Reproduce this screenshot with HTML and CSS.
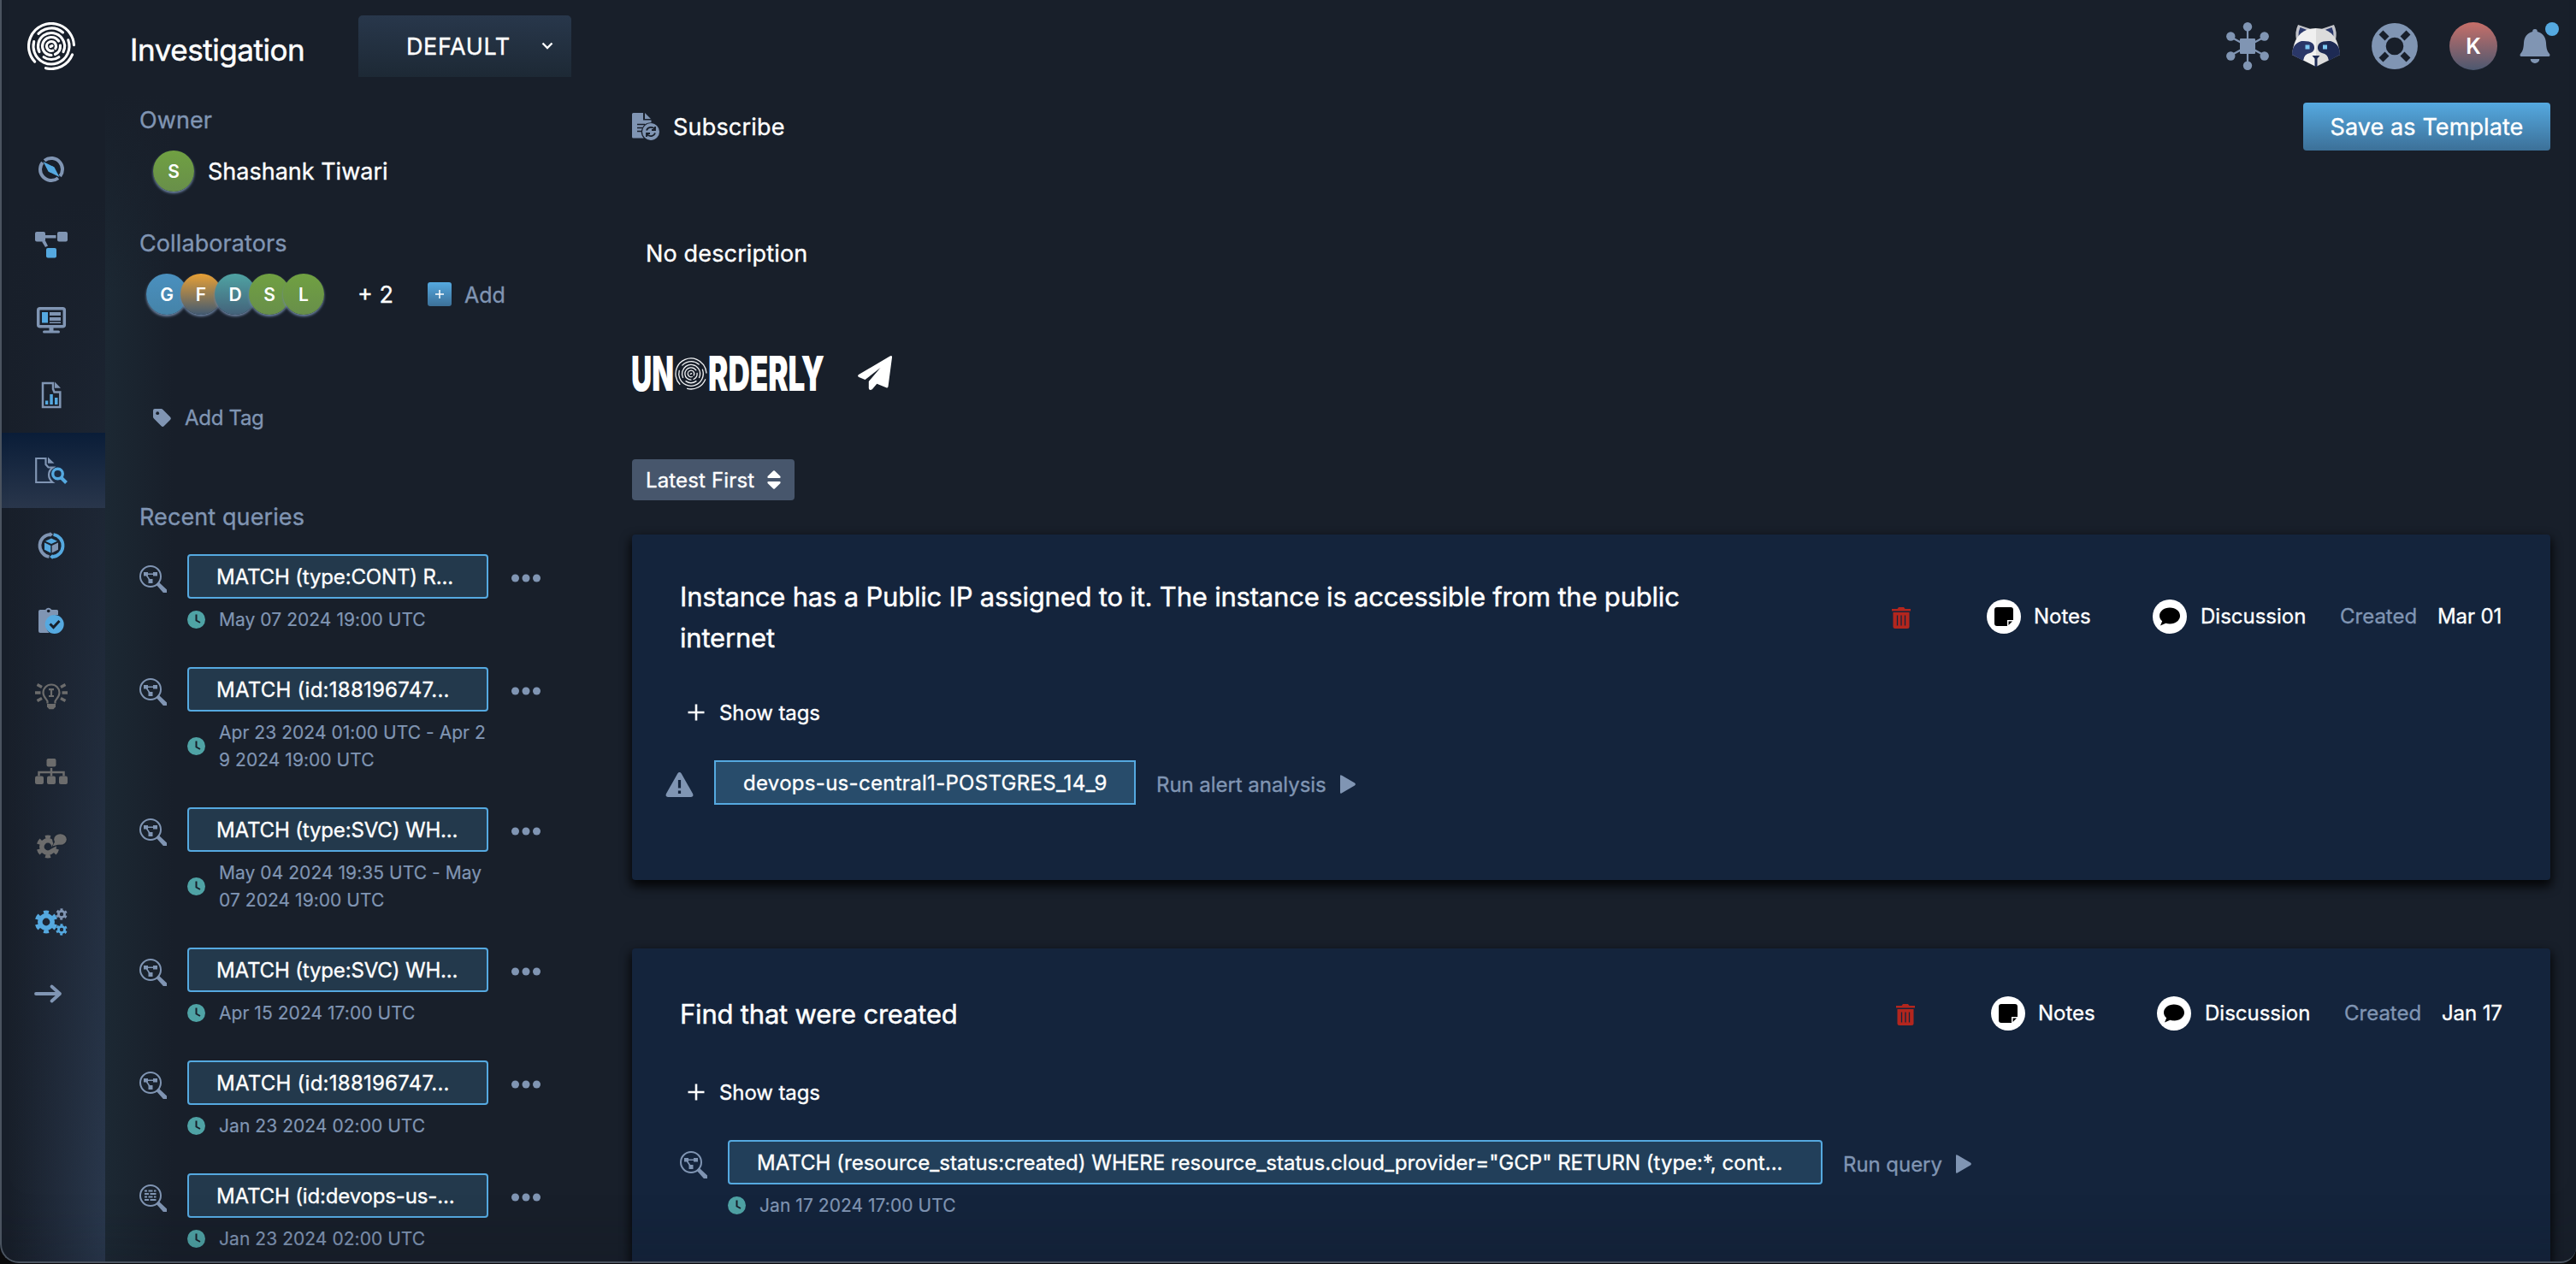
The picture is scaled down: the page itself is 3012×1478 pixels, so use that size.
FILE: index.html
```html
<!DOCTYPE html>
<html lang="en">
<head>
<meta charset="utf-8">
<title>Investigation</title>
<link rel="stylesheet" href="styles.css">
</head>
<body>
<svg class="defs" aria-hidden="true">
  <defs>
    <symbol id="lens" viewBox="0 0 32 32">
      <circle cx="13" cy="13" r="12" fill="none" stroke="currentColor" stroke-width="2"/>
      <path d="M20.5 22.5l2-2 9 8.5a2 2 0 0 1-2.800 2.800z" fill="currentColor" stroke="currentColor" stroke-width="1.500"/>
    </symbol>
    <symbol id="lens-graph" viewBox="0 0 32 32">
      <use href="#lens"/>
      <path d="M5 8h5v4.500H5zM16 8h5v4.500h-5zM10.500 16h5v5h-5z" fill="currentColor"/>
      <path d="M9 10.200h8M8.500 12l3.500 5" stroke="currentColor" stroke-width="1.600" fill="none"/>
    </symbol>
    <symbol id="lens-table" viewBox="0 0 32 32">
      <use href="#lens"/>
      <path d="M6 7.500h3m1.500 0h5m1.500 0h2.500M6 11h5m1.500 0h7M6 14.500h3m1.500 0h5m1.500 0h2.500M6 18h5m1.500 0h7" stroke="currentColor" stroke-width="1.800" fill="none"/>
    </symbol>
    <symbol id="clock" viewBox="0 0 21 21">
      <circle cx="10.500" cy="10.500" r="10.500" fill="#4fa3a5"/>
      <path d="M10.500 4.500v7l4.500 2.500" stroke="#181f2a" stroke-width="2" fill="none"/>
    </symbol>
    <symbol id="dots" viewBox="0 0 34 10">
      <circle cx="4.500" cy="5" r="4.500"/><circle cx="17" cy="5" r="4.500"/><circle cx="29.500" cy="5" r="4.500"/>
    </symbol>
    <symbol id="plus" viewBox="0 0 20 20"><path d="M10 .5v19M.5 10h19" stroke="currentColor" stroke-width="2.600"/></symbol>
    <symbol id="play" viewBox="0 0 18 22"><path d="M0 1.500Q0-.5 2 .8L17 9.500q1.800 1.500 0 3L2 21.200Q0 22.500 0 20.500z" fill="currentColor"/></symbol>
    <symbol id="trash" viewBox="0 0 22 25">
      <path d="M0 2h6.500L8 0h6l1.500 2H22v2.500H0z" fill="#b3261e"/>
      <path d="M1.500 6h19v16.500a2.500 2.500 0 0 1-2.500 2.500H4a2.500 2.500 0 0 1-2.500-2.500z" fill="#b3261e"/>
      <path d="M6.500 9.500v12M11 9.500v12M15.500 9.500v12" stroke="#14243c" stroke-width="1.300"/>
    </symbol>
    <symbol id="note" viewBox="0 0 40 40">
      <circle cx="20" cy="20" r="20" fill="#fff"/>
      <path d="M12 9h16a3 3 0 0 1 3 3v12h-7v7H12a3 3 0 0 1-3-3V12a3 3 0 0 1 3-3z"/>
      <path d="M25.500 30v-4.500H30z"/>
    </symbol>
    <symbol id="chat" viewBox="0 0 40 40">
      <circle cx="20" cy="20" r="20" fill="#fff"/>
      <path d="M20 9.500c6.800 0 12 4.200 12 9.500s-5.200 9.500-12 9.500c-1.600 0-3.200-.3-4.600-.7L9 30.500l2.200-5.200C9.200 23.600 8 21.400 8 19c0-5.300 5.200-9.500 12-9.500z"/>
    </symbol>
    <symbol id="rings" viewBox="0 0 56 56">
      <g fill="none" stroke="currentColor" stroke-linecap="round">
        <circle cx="28" cy="28" r="26.500" pathLength="360" stroke-dasharray="82 33 220 25" transform="rotate(22 28 28)"/>
        <circle cx="28" cy="28" r="21" pathLength="360" stroke-dasharray="215 29 86 30" transform="rotate(-20 28 28)"/>
        <circle cx="28" cy="28" r="15.500" pathLength="360" stroke-dasharray="70 30 230 30" transform="rotate(55 28 28)"/>
        <circle cx="28" cy="28" r="10.500" pathLength="360" stroke-dasharray="70 25 235 30" transform="rotate(-5 28 28)"/>
        <circle cx="28" cy="28" r="5.500" pathLength="360" stroke-dasharray="320 40" transform="rotate(70 28 28)"/>
        <path d="M27 28.500l2-1"/>
      </g>
    </symbol>
    <symbol id="cog" viewBox="0 0 28 28">
      <g fill="none" stroke="currentColor">
        <circle cx="14" cy="14" r="7.200" stroke-width="5.600"/>
        <circle cx="14" cy="14" r="11.300" stroke-width="4.200" pathLength="12" stroke-dasharray="1 1" transform="rotate(-105 14 14)"/>
      </g>
    </symbol>
    <linearGradient id="white-dim"><stop offset=".5" stop-color="#f0f0f0"/><stop offset=".5" stop-color="#dcdcdc"/></linearGradient>
  </defs>
</svg>

<div class="shell">
  <nav class="sidebar">
    <a class="brand"><svg width="56" height="56"><use href="#rings"/></svg></a>
    <a class="nav-item"><svg viewBox="0 0 40 40"><circle cx="20" cy="20" r="13" fill="none" stroke="#8095b3" stroke-width="4" pathLength="360" stroke-dasharray="166 14" transform="rotate(52 20 20)"/><path d="M10.500 11L23.500 17.500 29.500 29 16.500 22.500z" fill="#55a9e0"/><circle cx="20" cy="20" r="3.800" fill="#55a9e0"/></svg></a>
    <a class="nav-item"><svg viewBox="0 0 40 40"><g fill="#8095b3"><rect x="1" y="5" width="12" height="11.500" rx="2"/><rect x="27" y="5" width="12" height="11.500" rx="2"/><path d="M13 9h12.500v3.500H13zM9 16.500l4-1 3 6-3 1.500z"/></g><rect x="14" y="24" width="12" height="11.500" rx="2" fill="#55a9e0"/></svg></a>
    <a class="nav-item"><svg viewBox="0 0 40 40"><rect x="4.700" y="6.700" width="30.600" height="21" rx="2" fill="none" stroke="#8095b3" stroke-width="3.500"/><rect x="9" y="11" width="7" height="12.500" fill="#55a9e0"/><path d="M18 11h13v4H18zM18 17h13v4H18zM18 22.500h13v1.500H18zM17.500 29h5v3.500h6a1.500 1.500 0 0 1 0 3h-17a1.500 1.500 0 0 1 0-3h6z" fill="#8095b3"/></svg></a>
    <a class="nav-item"><svg viewBox="0 0 40 40"><path d="M22 6H10v28h20.300V16.500H23.500L22 13z" fill="none" stroke="#8095b3" stroke-width="2.500"/><path d="M24 4.500v7.300h7z" fill="#8095b3"/><path d="M13 26.500h3.300V31H13zM18.300 19h3.500v12h-3.500zM24 23h3.500v8H24z" fill="#55a9e0"/></svg></a>
    <a class="nav-item active"><svg viewBox="0 0 40 40"><path d="M13.500 6H2.200v28h19.300c-6-5-6-13 .5-17.500h-5.500L13.500 13z" fill="none" stroke="#8095b3" stroke-width="2.200"/><path d="M16 4.500v7.300h7.500z" fill="#8095b3"/><circle cx="27.500" cy="24" r="5.800" fill="none" stroke="#55a9e0" stroke-width="3.400"/><path d="M31.500 28.500l6 6" stroke="#55a9e0" stroke-width="4"/></svg></a>
    <a class="nav-item"><svg viewBox="0 0 40 40"><g fill="none" stroke-width="3.800"><path d="M19 6.800a13.200 13.200 0 0 0-1.500 26.200" stroke="#8095b3"/><path d="M22.500 7a13.200 13.200 0 0 1-1.500 26.200" stroke="#55a9e0"/></g><path d="M18.500 4l3.500 3-3.500 3z" fill="#8095b3"/><path d="M21.500 30l-3.500 3 3.500 3z" fill="#55a9e0"/><path d="M20 11.500l7 3.300-7 3.300-7-3.300z" fill="#55a9e0"/><path d="M12 16.500l7.300 3.400v8.600L12 24.800z" fill="#55a9e0"/><path d="M28 16.500l-7.300 3.400v8.600l7.300-3.700z" fill="#8095b3"/></svg></a>
    <a class="nav-item"><svg viewBox="0 0 40 40"><path d="M7 7h6q3.500-4.500 7.500 0h6a1.500 1.500 0 0 1 1.500 1.500V13A12.500 12.500 0 0 0 17.500 34H7a2 2 0 0 1-2-2V9a2 2 0 0 1 2-2z" fill="#8095b3"/><circle cx="16.700" cy="8.500" r="1.800" fill="#181f2a"/><circle cx="23.700" cy="24" r="11" fill="#55a9e0"/><path d="M18.500 23.500l4 4 7-7.500" fill="none" stroke="#181f2a" stroke-width="3"/></svg></a>
    <a class="nav-item off"><svg viewBox="0 0 40 40"><g fill="none" stroke="currentColor"><path d="M15.500 28.500v-2.500c-1.500-3-5-5.500-5-10a9.500 9.500 0 0 1 19 0c0 4.500-3.500 7-5 10v2.500" stroke-width="2.200"/><path d="M17 12.200h6M17 20h6M20 12.200V20" stroke-width="2.200"/><path d="M1 16h6.500M32.500 16H39M3.500 6.500L9 9.500M36.500 6.500L31 9.500M3.500 25.500L9 22.500M36.500 25.500L31 22.500" stroke-width="3.400"/></g><path d="M15 29h10v3.500l-2.500 2.800h-5L15 32.500z" fill="currentColor"/></svg></a>
    <a class="nav-item off"><svg viewBox="0 0 40 40"><g fill="currentColor"><rect x="14.500" y="5" width="11" height="9.500" rx="2"/><rect x="1" y="25.500" width="10" height="9.500" rx="2"/><rect x="15" y="25.500" width="10" height="9.500" rx="2"/><rect x="29" y="25.500" width="10" height="9.500" rx="2"/></g><path d="M20 16v9.500M5.500 25.500V21h29v4.500" fill="none" stroke="currentColor" stroke-width="2.500"/></svg></a>
    <a class="nav-item off"><svg viewBox="0 0 40 40"><use href="#cog" x="2" y="6" width="28" height="28"/><ellipse cx="30" cy="11.500" rx="9" ry="8" fill="#1c2532"/><path d="M19 23l4.500-9 6 3.500z" fill="#1c2532"/><ellipse cx="30.500" cy="11.500" rx="7.300" ry="6.300" fill="currentColor"/><path d="M21.500 19.500l3.500-7 5 4.500z" fill="currentColor"/></svg></a>
    <a class="nav-item"><svg viewBox="0 0 40 40"><g color="#55a9e0"><use href="#cog" x="0" y="6" width="28" height="28"/><use href="#cog" x="25" y="22" width="14" height="14"/></g><g color="#8095b3"><use href="#cog" x="25" y="4" width="14" height="14"/></g></svg></a>
    <a class="nav-item expand"><svg viewBox="0 0 40 40"><path d="M2 16h28M20.500 7.500L30 16l-9.500 8.500" fill="none" stroke="#8095b3" stroke-width="3.800" stroke-linecap="round" stroke-linejoin="round"/></svg></a>
  </nav>

  <div class="page">
    <header class="topbar">
      <h1>Investigation</h1>
      <button class="env"><span>DEFAULT</span><svg width="14" height="9" viewBox="0 0 14 9"><path d="M1.500 1.500L7 7l5.500-5.500" fill="none" stroke="#fff" stroke-width="2.400"/></svg></button>
      <div class="tools">
        <svg class="hub" width="52" height="56" viewBox="0 0 52 56"><g stroke="#8095b3" stroke-width="2.200"><path d="M26 5v46M6 17l40 22M46 17L6 39"/></g><g fill="#8095b3"><rect x="17" y="19" width="18" height="18" rx="1"/><circle cx="26" cy="5.200" r="5.200"/><circle cx="26" cy="50.800" r="5.200"/><circle cx="6.300" cy="16.500" r="5.200"/><circle cx="45.700" cy="16.500" r="5.200"/><circle cx="6.300" cy="39.500" r="5.200"/><circle cx="45.700" cy="39.500" r="5.200"/></g></svg>
        <svg class="raccoon" width="56" height="50" viewBox="0 0 56 50"><path d="M7 0l15 5L5 18Q3 8 7 0zM49 0L34 5l17 13Q53 8 49 0z" fill="#c3c4ca"/><path d="M9.500 3l8 3L7.500 14Q7 8 9.500 3zM46.500 3l-8 3 10 8Q49 8 46.500 3z" fill="#2c3a6c"/><path d="M1 28Q6 4 28 4t27 24l1 7-28 14L0 35z" fill="url(#white-dim)"/><path d="M0 35Q0 22 11 19q16-1 15 9-1 4-5 5-7 1-8 9z" fill="#2a3768"/><path d="M56 35q0-13-11-16-16-1-15 9 1 4 5 5 7 1 8 9z" fill="#1d2a54"/><path d="M23.500 36h9l-3 3.500v9.500h-3v-9.500z" fill="#1d2a54"/><path d="M15.500 23.500h5v5h-5zM36 23.500h5v5h-5z" fill="#7cc8f2"/></svg>
        <svg class="help" width="54" height="54" viewBox="0 0 54 54"><circle cx="27" cy="27" r="18.600" fill="none" stroke="#8095b3" stroke-width="16.600"/><g stroke="#181f2a" stroke-width="7"><path d="M11 11l7 7M43 11l-7 7M11 43l7-7M43 43l-7-7"/></g></svg>
        <span class="avatar me">K</span>
        <span class="bell"><svg width="36" height="42" viewBox="0 0 36 42"><path d="M18 1a2.800 2.800 0 0 1 2.800 3C27 5.500 30.500 10 31 17c.3 7 1.500 10 4 13 1 1.500.5 3-1 3H2c-1.500 0-2-1.500-1-3 2.500-3 3.700-6 4-13C5.500 10 9 5.500 15.200 4A2.800 2.800 0 0 1 18 1zM12.700 36h10.600a5.300 5 0 0 1-10.600 0z" fill="#8095b3"/></svg><i class="badge"></i></span>
      </div>
    </header>

    <div class="body">
      <aside class="panel">
        <h2>Owner</h2>
        <div class="owner"><span class="avatar green">S</span><span>Shashank Tiwari</span></div>
        <h2 class="collab-title">Collaborators</h2>
        <div class="collab">
          <span class="avatar blue">G</span><span class="avatar orange">F</span><span class="avatar teal">D</span><span class="avatar green">S</span><span class="avatar green">L</span>
          <span class="more">+ 2</span>
          <span class="add-box"><svg width="10" height="10"><path d="M5 0v10M0 5h10" stroke="#fff" stroke-width="1.500"/></svg></span>
          <span class="add">Add</span>
        </div>
        <div class="add-tag"><svg width="21" height="21" viewBox="0 0 21 21"><path d="M0 2Q0 0 2 0h7.500q1 0 2 1l8.700 8.700q1.400 1.500 0 3l-7.500 7.500q-1.500 1.400-3 0L1 11.500Q0 10.500 0 9.500z" fill="#8095b3"/><circle cx="5.200" cy="5.200" r="1.900" fill="#181f2a"/></svg><span>Add Tag</span></div>
        <h2>Recent queries</h2>
        <ul class="queries">
          <li><svg class="q-icon"><use href="#lens-graph"/></svg><div class="q-main"><a class="chip">MATCH (type:CONT) R...</a><div class="when"><svg><use href="#clock"/></svg><span>May 07 2024 19:00 UTC</span></div></div><svg class="q-menu"><use href="#dots"/></svg></li>
          <li><svg class="q-icon"><use href="#lens-graph"/></svg><div class="q-main"><a class="chip id">MATCH (id:188196747...</a><div class="when"><svg><use href="#clock"/></svg><span>Apr 23 2024 01:00 UTC - Apr 2<br>9 2024 19:00 UTC</span></div></div><svg class="q-menu"><use href="#dots"/></svg></li>
          <li><svg class="q-icon"><use href="#lens-graph"/></svg><div class="q-main"><a class="chip">MATCH (type:SVC) WH...</a><div class="when"><svg><use href="#clock"/></svg><span>May 04 2024 19:35 UTC - May<br>07 2024 19:00 UTC</span></div></div><svg class="q-menu"><use href="#dots"/></svg></li>
          <li><svg class="q-icon"><use href="#lens-graph"/></svg><div class="q-main"><a class="chip">MATCH (type:SVC) WH...</a><div class="when"><svg><use href="#clock"/></svg><span>Apr 15 2024 17:00 UTC</span></div></div><svg class="q-menu"><use href="#dots"/></svg></li>
          <li><svg class="q-icon"><use href="#lens-graph"/></svg><div class="q-main"><a class="chip id">MATCH (id:188196747...</a><div class="when"><svg><use href="#clock"/></svg><span>Jan 23 2024 02:00 UTC</span></div></div><svg class="q-menu"><use href="#dots"/></svg></li>
          <li><svg class="q-icon"><use href="#lens-table"/></svg><div class="q-main"><a class="chip">MATCH (id:devops-us-...</a><div class="when"><svg><use href="#clock"/></svg><span>Jan 23 2024 02:00 UTC</span></div></div><svg class="q-menu"><use href="#dots"/></svg></li>
        </ul>
      </aside>

      <main class="main">
        <div class="actions">
          <svg width="32" height="32" viewBox="0 0 32 32"><path d="M1.500 0H13v8.500h9.500v2.700a11 11 0 0 0-8.800 18.300H1.500A1.500 1.500 0 0 1 0 28V1.500A1.500 1.500 0 0 1 1.500 0zM15 0l7 7h-7z" fill="#8095b3"/><path d="M6 13.500h9M6 17.500h6.500M6 21.500h6" stroke="#181f2a" stroke-width="1.500"/><circle cx="22" cy="22" r="10" fill="#8095b3"/><path d="M17 20.500a5.500 5.500 0 0 1 9.500-1.500M27 23.500a5.500 5.500 0 0 1-9.500 1.500M27 16v4h-4M17 28v-4h4" fill="none" stroke="#181f2a" stroke-width="1.800"/></svg>
          <span class="subscribe">Subscribe</span>
          <button class="save">Save as Template</button>
        </div>
        <p class="desc">No description</p>
        <div class="brand-row">
          <svg class="wordmark" width="225" height="42" viewBox="0 0 225 42"><text x="-1" y="41" textLength="50" lengthAdjust="spacingAndGlyphs">UN</text><use href="#rings" x="50" y="2" width="38" height="38"/><text x="89" y="41" textLength="136" lengthAdjust="spacingAndGlyphs">RDERLY</text></svg>
          <svg class="send" width="40" height="40" viewBox="0 0 40 40"><path d="M37.500.4Q40.400-.7 40 2l-4.500 34q-.4 2-2.200 1.200l-11-4.500-5.500 6.500q-3.500 2-4-1.300v-8L26.500 14 8.500 28 1.300 25Q-1 23.500 1 22z" fill="#fff"/></svg>
        </div>
        <button class="sort"><span>Latest First</span><svg width="16" height="22" viewBox="0 0 16 22"><path d="M7.200.5q.8-.7 1.600 0l6.700 6.500q.8 2-1 2h-13q-1.800 0-1-2zM7.200 21.500q.8.700 1.600 0l6.700-6.500q.8-2-1-2h-13q-1.800 0-1 2z" fill="#fff"/></svg></button>

        <section class="card">
          <div class="card-head">
            <h3>Instance has a Public IP assigned to it. The instance is accessible from the public internet</h3>
            <div class="meta"><svg class="trash"><use href="#trash"/></svg><svg class="disc"><use href="#note"/></svg><span class="notes">Notes</span><svg class="disc"><use href="#chat"/></svg><span class="discussion">Discussion</span><span class="muted">Created</span><span class="date">Mar 01</span></div>
          </div>
          <div class="tags"><svg><use href="#plus"/></svg><span>Show tags</span></div>
          <div class="run alert">
            <svg class="warn" viewBox="0 0 33 29"><path d="M14.300 1.500q2.200-2.800 4.400 0L32 25q1.500 3.500-2 4H3q-3.500-.5-2-4z" fill="#8095b3"/><path d="M16.500 9v9.500M16.500 21.500v3.500" stroke="#14243c" stroke-width="3.200"/></svg>
            <a class="chip square">devops-us-central1-POSTGRES_14_9</a><span class="go">Run alert analysis</span><svg class="play"><use href="#play"/></svg>
          </div>
        </section>

        <section class="card tall">
          <div class="card-head">
            <h3>Find that were created</h3>
            <div class="meta"><svg class="trash"><use href="#trash"/></svg><svg class="disc"><use href="#note"/></svg><span class="notes">Notes</span><svg class="disc"><use href="#chat"/></svg><span class="discussion">Discussion</span><span class="muted">Created</span><span class="date jan">Jan 17</span></div>
          </div>
          <div class="tags"><svg><use href="#plus"/></svg><span>Show tags</span></div>
          <div class="run query">
            <svg class="q-icon"><use href="#lens-graph"/></svg>
            <div class="q-main"><a class="chip wide">MATCH (resource_status:created) WHERE resource_status.cloud_provider="GCP" RETURN (type:*, cont...</a><div class="when"><svg><use href="#clock"/></svg><span>Jan 17 2024 17:00 UTC</span></div></div>
            <span class="go">Run query</span><svg class="play"><use href="#play"/></svg>
          </div>
        </section>
      </main>
    </div>
  </div>
  <div class="window-edge"></div>
</div>
</body>
</html>
```
FILE: styles.css
```css
* { box-sizing: border-box; margin: 0; padding: 0; }
html { background: #0a0a0c; }
body { font-family: Inter, "Liberation Sans", sans-serif; font-size: 24px; font-weight: 400; color: #fff; height: 1478px; overflow: hidden; -webkit-text-stroke: .35px currentColor; }
svg { display: block; flex: none; overflow: visible; }
.defs { position: absolute; width: 0; height: 0; }
button { font: inherit; color: inherit; border: 0; -webkit-text-stroke: inherit; }

.shell { position: relative; display: grid; grid-template-columns: 123px 1fr; height: 1477px; overflow: hidden; background: #181f2a; border-radius: 0 0 18px 22px; }

/* navigation rail */
.sidebar { display: flex; flex-direction: column; padding-top: 26px; background: linear-gradient(to bottom, #181f2a 15%, #181f2a00 100%), linear-gradient(to right, #181f2a 10%, #2b3a50 100%); }
.brand { height: 56px; margin: 0 0 72px 32px; color: #fff; }
.brand svg { stroke-width: 3.1; }
.nav-item { display: flex; align-items: center; height: 88px; padding-left: 40px; }
.nav-item svg { width: 40px; height: 40px; }
.nav-item.active { background: linear-gradient(#0a1d38, #29364b); }
.nav-item.off { color: #6c6c6c; }

.page { display: flex; flex-direction: column; min-width: 0; background: linear-gradient(to bottom, #181f2a 110px, #181f2a00 340px), linear-gradient(to right, #1c2833, #181f2a 80px); }
.topbar { display: flex; height: 108px; padding: 18px 30px 0 29px; }
h1 { font-size: 35px; font-weight: 400; letter-spacing: -.45px; line-height: 81px; width: 267px; -webkit-text-stroke-width: .5px; }
.env { display: flex; align-items: center; justify-content: space-between; width: 249px; height: 72px; padding: 0 21px 0 56px; font-size: 27px; letter-spacing: .6px; background: linear-gradient(#28374b, #1d2935); border-radius: 5px 5px 0 0; }
.env span { margin-top: 1px; }
.env svg { margin-top: -1px; }
.tools { display: flex; margin-left: auto; padding-top: 8px; }
.raccoon { margin: 3px 0 0 26px; }
.help { margin: 1px 0 0 37px; }
.bell { position: relative; padding-top: 7px; margin-left: 26px; }
.badge { position: absolute; left: 30px; top: 0; width: 16px; height: 16px; border-radius: 50%; background: #55a9e0; }

.avatar { display: flex; align-items: center; justify-content: center; flex: none; width: 48px; height: 48px; border-radius: 50%; font-size: 21px; font-weight: 600; -webkit-text-stroke-width: 0; box-shadow: 0 2px 3px #6f86a6; }
.avatar.me { width: 56px; height: 56px; margin-left: 37px; font-size: 25px; background: linear-gradient(#c76f69, #4c5870); box-shadow: none; }
.green { background: linear-gradient(#70a042, #688f4a); }
.blue { background: linear-gradient(#4a90bf, #4583a8); }
.orange { background: linear-gradient(#e8a035, #425a72); }
.teal { background: linear-gradient(#4fa3a3, #44627a); }

.body { display: flex; flex: 1; min-height: 0; }

/* left panel */
.panel { width: 616px; padding: 12px 0 0 40px; font-size: 27px; }
h2 { height: 40px; font-size: 27px; font-weight: 400; line-height: 42px; letter-spacing: .1px; color: #8095b3; }
.owner { display: flex; align-items: center; gap: 16px; height: 48px; margin: 16px 0 40px 16px; }
.collab { display: flex; align-items: center; height: 48px; margin: 16px 0 100px 8px; }
.collab .avatar + .avatar { margin-left: -8px; }
.more { margin-left: 39px; width: 82px; }
.add-box { display: flex; align-items: center; justify-content: center; width: 28px; height: 28px; border-radius: 3px; background: linear-gradient(#55a9e0, #3c7098); }
.add { margin: 1px 0 0 15px; font-size: 25px; color: #8095b3; }
.add-tag { display: flex; align-items: center; gap: 16px; height: 40px; margin: 0 0 76px 16px; font-size: 24px; letter-spacing: -.3px; color: #8095b3; }
.queries { list-style: none; display: flex; flex-direction: column; gap: 40px; margin-top: 24px; }
.queries li { display: flex; }
.q-icon { width: 32px; height: 32px; margin-top: 13px; color: #8095b3; }
.queries .q-main { width: 352px; margin-left: 24px; }
.q-menu { width: 34px; height: 10px; margin: 23px 0 0 27px; fill: #8095b3; }

.chip { display: block; height: 52px; line-height: 50px; padding-left: 32px; font-size: 24px; letter-spacing: -.15px; white-space: nowrap; border: 2px solid #55a9e0; border-radius: 4px; background: #23394c; }
.chip.id { letter-spacing: .25px; }
.when { display: flex; align-items: center; gap: 16px; margin-top: 8px; font-size: 21px; line-height: 32px; letter-spacing: .05px; color: #8095b3; white-space: nowrap; -webkit-text-stroke-width: .2px; }
.when svg { width: 21px; height: 21px; }
.when span { margin: 1px 0 -1px; }

/* main column */
.main { flex: 1; padding: 12px 30px 0 0; }
.actions { display: flex; align-items: center; height: 56px; font-size: 27px; }
.subscribe { margin-left: 16px; letter-spacing: .2px; }
.save { margin-left: auto; width: 289px; height: 56px; letter-spacing: .1px; border-radius: 4px; background: linear-gradient(#55a9e0, #3c7098); }
.desc { height: 40px; margin: 100px 0 0 16px; font-size: 27px; line-height: 42px; letter-spacing: .15px; }
.brand-row { display: flex; gap: 39px; height: 41px; margin-top: 100px; }
.wordmark { color: #f2f4f6; stroke-width: 1.9; }
.wordmark text { font-family: Inter, sans-serif; font-size: 56px; font-weight: 900; fill: #fff; stroke: none; -webkit-text-stroke-width: 0; }
.sort { display: flex; align-items: center; justify-content: space-between; width: 190px; height: 48px; margin-top: 80px; padding: 0 16px; font-size: 24px; letter-spacing: .15px; border-radius: 4px; background: #47566c; }

.card { height: 404px; margin-top: 40px; padding: 48px 56px 0; background: #14243c; border-radius: 4px; box-shadow: 0 6px 12px 2px #000c; }
.card.tall { height: 440px; margin-top: 80px; }
.card-head { display: flex; justify-content: space-between; align-items: center; min-height: 56px; }
h3 { width: 1200px; margin: 1px 0 -1px; font-size: 31px; font-weight: 400; line-height: 48px; letter-spacing: -.2px; -webkit-text-stroke-width: .45px; }
.meta { display: flex; align-items: center; height: 40px; line-height: 42px; }
.trash { width: 22px; height: 25px; margin: 2px 89px 0 0; }
.disc { width: 40px; height: 40px; }
.notes { width: 139px; margin-left: 15px; }
.discussion { width: 163px; margin-left: 16px; }
.muted { width: 114px; color: #8095b3; }
.date { width: 76px; letter-spacing: -.1px; }
.date.jan { width: 71px; }
.tags { display: flex; align-items: center; gap: 17px; height: 40px; margin: 44px 0 36px 9px; letter-spacing: -.1px; }
.tags svg { width: 20px; height: 20px; }
.run { display: flex; align-items: flex-start; }
.alert { margin-left: -17px; }
.warn { width: 33px; height: 29px; margin: 14px 24px 0 0; }
.chip.square { width: 493px; border-radius: 0; background: #284c6b; letter-spacing: .3px; }
.chip.wide { width: 1280px; background: #223f5a; letter-spacing: .02px; }
.run .q-main { margin-left: 24px; }
.go { margin-left: 24px; line-height: 58px; letter-spacing: -.05px; color: #8095b3; }
.play { width: 18px; height: 22px; margin: 17px 0 0 16px; color: #8095b3; }

/* outline of the window, drawn above everything */
.window-edge { position: absolute; inset: 0; border: solid #4a535f; border-width: 0 0 2px 2px; border-radius: 0 0 18px 22px; pointer-events: none; box-shadow: inset 0 -70px 60px -50px #0d131c33; }
```
